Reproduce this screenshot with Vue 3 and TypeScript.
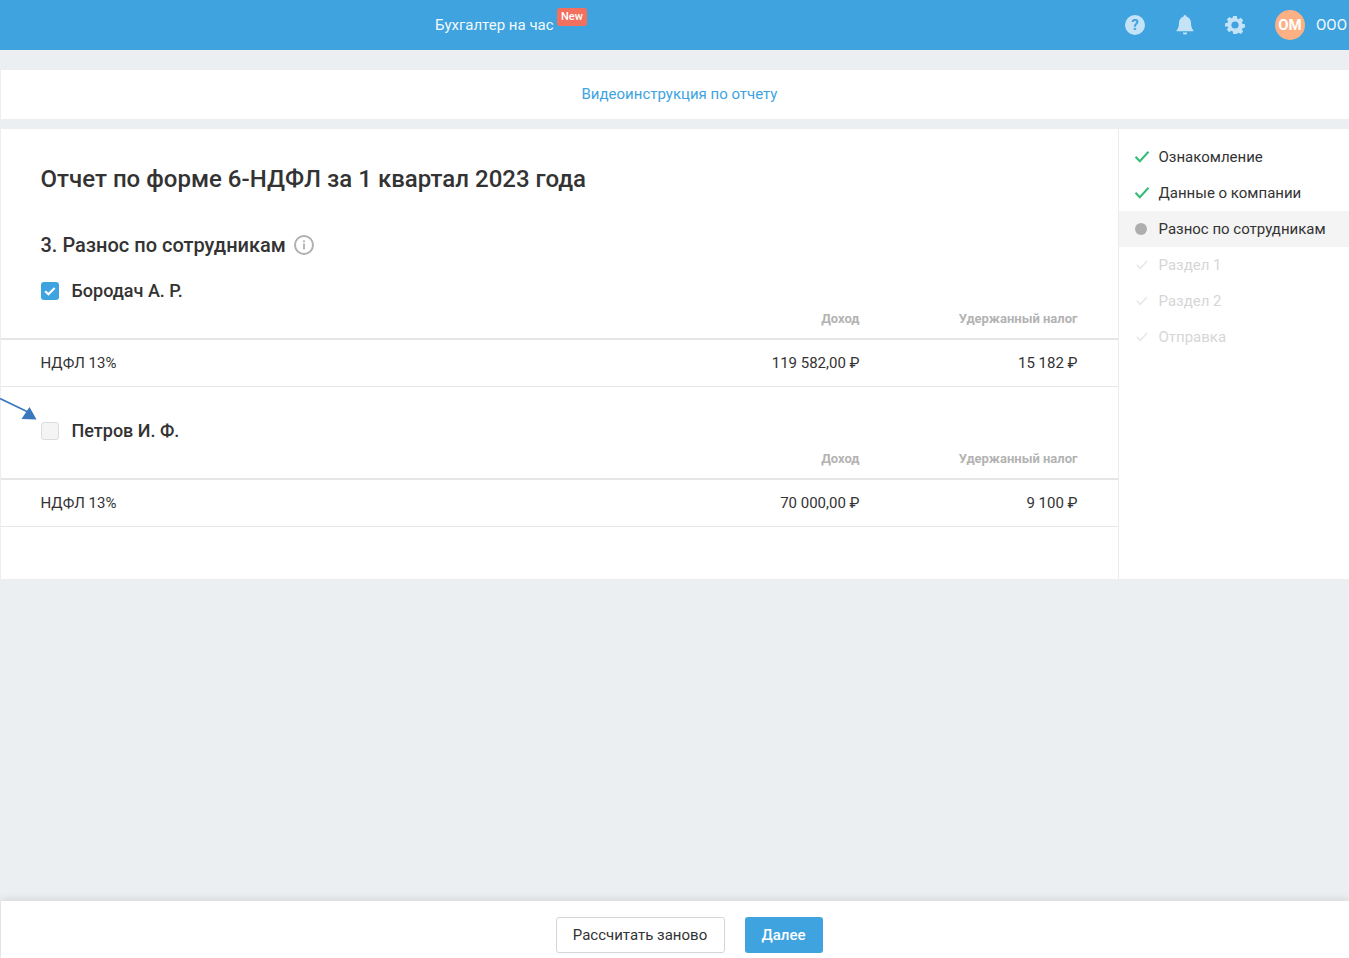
<script setup lang="ts">
interface Row { name: string; checked: boolean; income: string; tax: string }
const employees: Row[] = [
  { name: 'Бородач А. Р.', checked: true, income: '119 582,00 ₽', tax: '15 182 ₽' },
  { name: 'Петров И. Ф.', checked: false, income: '70 000,00 ₽', tax: '9 100 ₽' },
]
const steps = [
  { label: 'Ознакомление', state: 'done' },
  { label: 'Данные о компании', state: 'done' },
  { label: 'Разнос по сотрудникам', state: 'active' },
  { label: 'Раздел 1', state: 'todo' },
  { label: 'Раздел 2', state: 'todo' },
  { label: 'Отправка', state: 'todo' },
]
</script>

<template>
  <div class="page">
    <header class="topbar">
      <div class="product">
        <span class="product-name">Бухгалтер на час</span>
        <span class="new">New</span>
      </div>
      <div class="actions">
        <svg class="ico" viewBox="0 0 20 20"><circle cx="10" cy="10" r="10" fill="#c5e3f7"/><text x="10" y="15.2" text-anchor="middle" class="q">?</text></svg>
        <svg class="ico" viewBox="0 0 20 20"><path d="M10 0a1.6 1.6 0 0 1 1.6 1.7C14.4 2.4 16 4.800 16 7.800c0 4 .8 5.800 2.400 7.400v1H1.600v-1C3.200 13.600 4 11.800 4 7.800c0-3 1.600-5.400 4.400-6.100A1.600 1.600 0 0 1 10 0zM7.800 17.400h4.400a2.200 2.200 0 0 1-4.400 0z" fill="#c5e3f7"/></svg>
        <svg class="ico" viewBox="0 0 20 20"><path fill-rule="evenodd" d="M8 0h4l.5 2.800 1.500.7 2.400-1.500 2.700 2.800-1.500 2.300.6 1.500 2.800.5v3.800l-2.800.6-.6 1.500 1.500 2.300-2.700 2.700-2.400-1.500-1.500.7L12 20H8l-.5-2.800-1.500-.7-2.400 1.500-2.700-2.700 1.500-2.300-.6-1.500L-1 11.900V8.100l2.800-.5.6-1.500L.9 3.800l2.700-2.800L6 2.500l1.500-.7zM10 6a4 4 0 1 0 0 8 4 4 0 0 0 0-8z" fill="#c5e3f7" transform="translate(1 1) scale(.9)"/></svg>
        <div class="avatar">ОМ</div>
        <span class="org">ООО</span>
      </div>
    </header>

    <div class="video-bar"><a class="video-link">Видеоинструкция по отчету</a></div>

    <section class="card">
      <main class="content">
        <h1>Отчет по форме 6-НДФЛ за 1 квартал 2023 года</h1>
        <h2>
          3. Разнос по сотрудникам
          <svg class="info" viewBox="0 0 20 20"><circle cx="10" cy="10" r="9" fill="none" stroke="#b0b0b0" stroke-width="2"/><rect x="9.100" y="8.500" width="1.800" height="6" fill="#b0b0b0"/><rect x="9.100" y="5.300" width="1.800" height="1.800" fill="#b0b0b0"/></svg>
        </h2>

        <div v-for="e in employees" :key="e.name" class="employee">
          <div class="name-row">
            <span class="box" :class="{ on: e.checked }">
              <svg v-if="e.checked" viewBox="0 0 18 18"><path d="M4.200 9.300l3.200 3 6.300-6.400" fill="none" stroke="#fff" stroke-width="2.200"/></svg>
            </span>
            <span class="name">{{ e.name }}</span>
          </div>
          <div class="grid head">
            <span></span><span>Доход</span><span>Удержанный налог</span>
          </div>
          <div class="grid data">
            <span>НДФЛ 13%</span><span>{{ e.income }}</span><span>{{ e.tax }}</span>
          </div>
        </div>

        <svg class="arrow" viewBox="0 0 38 24"><path d="M0 1.500l28 13.500" stroke="#3a78bd" stroke-width="1.700" fill="none"/><path d="M36.500 22.500L21.500 22 29.500 10z" fill="#3a78bd"/></svg>
      </main>

      <aside class="steps">
        <div v-for="s in steps" :key="s.label" class="step" :class="s.state">
          <span v-if="s.state === 'active'" class="dot"></span>
          <svg v-else class="tick" viewBox="0 0 16 14"><path d="M1.500 6.800L5.800 11.300l8.700-9.500" fill="none" stroke-width="2"/></svg>
          <span>{{ s.label }}</span>
        </div>
      </aside>
    </section>

    <footer class="footer">
      <button class="btn ghost">Рассчитать заново</button>
      <button class="btn primary">Далее</button>
    </footer>
  </div>
</template>

<style>
html, body { margin: 0; background: #eceff2; }
</style>

<style scoped>
.page {
  height: 958px;
  overflow: hidden;
  display: flex;
  flex-direction: column;
  background: #eceff2;
  font-family: Roboto, "Liberation Sans", sans-serif;
  color: #333;
}
.topbar {
  height: 50px;
  flex: none;
  background: #3ea3df;
  display: flex;
  align-items: center;
  justify-content: space-between;
  padding-left: 435px;
  color: #fff;
}
.product { display: flex; position: relative; align-items: center; }
.product-name { font-size: 15px; line-height: 18px; color: #f2f9fd; }
.new {
  position: absolute;
  left: 122px;
  top: -8px;
  width: 30px;
  height: 18px;
  border-radius: 3px;
  background: #f36f5e;
  font-size: 11px;
  font-weight: 500;
  line-height: 17px;
  text-align: center;
  color: #fff;
}
.actions { display: flex; align-items: center; margin-right: 2px; }
.ico { width: 20px; height: 20px; margin-right: 30px; }
.q { font: 700 15px Roboto, sans-serif; fill: #3ea3df; }
.avatar {
  width: 30px;
  height: 30px;
  border-radius: 50%;
  background: #fdb083;
  color: #fff;
  font-size: 15px;
  font-weight: 700;
  line-height: 30px;
  text-align: center;
}
.org { margin-left: 11px; font-size: 15px; color: #f2f9fd; }
.video-bar {
  margin: 20px 0 10px 1px;
  height: 49px;
  box-sizing: border-box;
  flex: none;
  background: #fff;
  display: flex;
  align-items: center;
  justify-content: center;
  padding: 0 0 2px 9px;
}
.video-link { font-size: 15px; color: #3ea3df; }
.card {
  margin-left: .5px;
  height: 450px;
  flex: none;
  background: #fff;
  display: flex;
}
.content {
  position: relative;
  width: 1117px;
  flex: none;
  border-right: 1px solid #ececec;
}
h1 {
  margin: 34px 0 0 40px;
  font-size: 24px;
  line-height: 32px;
  font-weight: 500;
  letter-spacing: .02px;
  color: #333;
}
h2 {
  margin: 34px 0 18px 40px;
  height: 32px;
  display: flex;
  align-items: center;
  font-size: 20px;
  font-weight: 500;
  color: #333;
}
.info { width: 20px; height: 20px; margin-left: 8px; }
.employee + .employee { margin-top: 32px; }
.name-row { display: flex; align-items: center; height: 24px; margin: 0 0 0 40px; }
.box {
  width: 18px;
  height: 18px;
  box-sizing: border-box;
  border-radius: 3px;
  background: #f4f4f4;
  border: 1px solid #dcdcdc;
}
.box.on { background: #3ea3df; border: 0; }
.box svg { display: block; width: 18px; height: 18px; }
.name { margin: 0 0 2px 13px; font-size: 18px; font-weight: 500; color: #333; }
.grid {
  display: grid;
  grid-template-columns: 1fr 300px 218px;
  padding: 0 40px;
  text-align: right;
}
.grid span:first-child { text-align: left; }
.head {
  height: 37px;
  box-sizing: border-box;
  padding-top: 7px;
  line-height: 18px;
  font-size: 13px;
  font-weight: 700;
  color: #b3b3b3;
  border-bottom: 2px solid #e6e6e6;
}
.data {
  height: 47px;
  box-sizing: border-box;
  align-items: center;
  font-size: 15px;
  color: #333;
  border-bottom: 1px solid #e6e6e6;
}
.arrow { position: absolute; left: -.5px; top: 268px; width: 38px; height: 24px; }
.steps { flex: 1; padding-top: 10px; }
.step {
  height: 36px;
  display: flex;
  align-items: center;
  padding-left: 15px;
  font-size: 15px;
  color: #333;
}
.step > span:last-child { margin-left: 9px; }
.tick { width: 16px; height: 14px; stroke: #35bb78; }
.step.active { background: #f4f4f4; }
.dot { width: 12px; height: 12px; margin: 0 3px 0 1px; border-radius: 50%; background: #aeaeae; }
.step.todo { color: #d6d6d6; }
.step.todo .tick { stroke: #e8e8e8; transform: scale(.78); }
.footer {
  margin-top: auto;
  height: 57px;
  box-sizing: border-box;
  flex: none;
  margin-left: 1px;
  background: #fff;
  box-shadow: 0 -2px 8px rgba(0, 0, 0, .1);
  display: flex;
  align-items: center;
  justify-content: center;
  gap: 20px;
  padding: 10px 0 0 28px;
}
.btn {
  height: 36px;
  border-radius: 3px;
  font: 15px Roboto, sans-serif;
  box-sizing: border-box;
  cursor: pointer;
}
.ghost { width: 169px; background: #fff; border: 1px solid #d6d6d6; color: #333; }
.primary { width: 78px; background: #3ea3df; border: 0; color: #fff; font-weight: 500; }
</style>
